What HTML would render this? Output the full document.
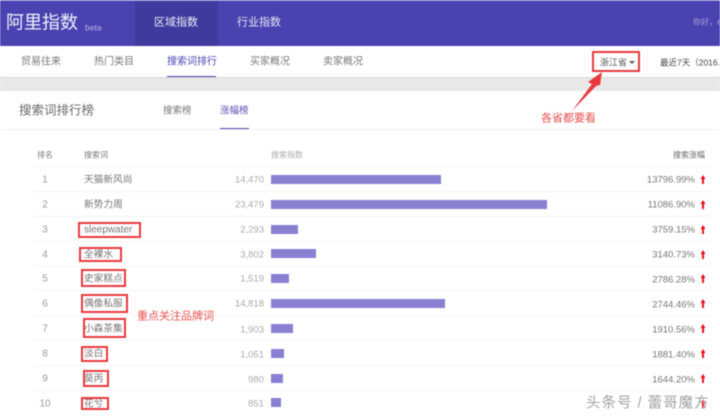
<!DOCTYPE html>
<html><head><meta charset="utf-8">
<style>
html,body{margin:0;padding:0;background:#fff}
#p{position:relative;width:720px;height:416px;overflow:hidden;background:#fff;font-family:"Liberation Sans","Noto Sans CJK SC",sans-serif;color:#666;filter:blur(.4px)}
#p div{position:absolute;white-space:nowrap}
.t{transform:translateY(calc(-50% + 1.5px));line-height:16px}
.sep{left:33px;width:677px;height:1px;background:#f4f4f4}
.bar{left:271px;height:9px;background:#8a80d2}
.r{font-size:10px;color:#999;width:20px;text-align:center;left:35px}
.k{font-size:9.7px;color:#777;left:84px}
.v{font-size:9.5px;color:#aaa;left:220px;width:44px;text-align:right}
.g{font-size:9.5px;color:#777;left:620px;width:75px;text-align:right}
.box{border:2px solid #e8383d;box-sizing:border-box}
.n{font-size:10px;color:#777}
.red{color:#e8504f;font-size:11px}
</style></head><body>
<div id="p">
<div style="left:0;top:0;width:720px;height:1px;background:#8f8ad0"></div>
<div style="left:0;top:1px;width:720px;height:45px;background:#4a42b0"></div>
<div style="left:135px;top:1px;width:83px;height:45px;background:#3f3a9e"></div>
<div class="t" style="left:6px;top:21px;font-size:18px;color:#f2f1fa">阿里指数</div>
<div class="t" style="left:85px;top:26px;font-size:8.5px;color:#b9b6e4">beta</div>
<div class="t" style="left:154px;top:21px;font-size:11px;color:#eeedf8">区域指数</div>
<div class="t" style="left:237px;top:21px;font-size:11px;color:#e6e5f5">行业指数</div>
<div class="t" style="left:693px;top:21px;font-size:8px;color:#a9a5dc">你好，a</div>

<div class="t n" style="left:21px;top:61px">贸易往来</div>
<div class="t n" style="left:94px;top:61px">热门类目</div>
<div class="t" style="left:167px;top:61px;font-size:10px;color:#4f47b4">搜索词排行</div>
<div style="left:167px;top:76px;width:49px;height:1px;background:#4a42b0"></div>
<div class="t n" style="left:250px;top:61px">买家概况</div>
<div class="t n" style="left:323px;top:61px">卖家概况</div>
<div class="t" style="left:600px;top:61px;font-size:9px;color:#555">浙江省</div>
<div style="left:629px;top:61px;width:0;height:0;border-left:3px solid transparent;border-right:3px solid transparent;border-top:3px solid #555"></div>
<div class="t" style="left:660px;top:61px;font-size:8.5px;color:#444">最近7天（2016.</div>
<div style="left:0;top:77px;width:720px;height:14px;background:#e8e8e8;border-top:1px solid #d8d8d8;box-sizing:border-box"></div>

<div class="t" style="left:19px;top:108.5px;font-size:12.5px;color:#666">搜索词排行榜</div>
<div class="t" style="left:163px;top:110px;font-size:9.5px;color:#777">搜索榜</div>
<div class="t" style="left:220px;top:110px;font-size:9.5px;color:#5a52b8">涨幅榜</div>
<div style="left:0;top:129px;width:720px;height:1px;background:#eee"></div>
<div style="left:220px;top:128px;width:29px;height:1px;background:#4a42b0"></div>

<div class="t" style="left:37px;top:154px;font-size:8px;color:#777">排名</div>
<div class="t" style="left:84px;top:154px;font-size:8px;color:#777">搜索词</div>
<div class="t" style="left:271px;top:154px;font-size:8px;color:#aaa">搜索指数</div>
<div class="t" style="left:673px;top:154px;font-size:8px;color:#666">搜索涨幅</div>

<div class="sep" style="top:166px"></div><div class="sep" style="top:191px"></div><div class="sep" style="top:216px"></div><div class="sep" style="top:241px"></div><div class="sep" style="top:266px"></div><div class="sep" style="top:290px"></div><div class="sep" style="top:315px"></div><div class="sep" style="top:340px"></div><div class="sep" style="top:365px"></div><div class="sep" style="top:390px"></div>

<div class="t r" style="top:179px">1</div><div class="t k" style="top:179px">天猫新风尚</div><div class="t v" style="top:179px">14,470</div><div class="bar" style="top:175px;width:170px"></div><div class="t g" style="top:179px">13796.99%</div>
<div class="t r" style="top:204px">2</div><div class="t k" style="top:204px">新势力周</div><div class="t v" style="top:204px">23,479</div><div class="bar" style="top:200px;width:276px"></div><div class="t g" style="top:204px">11086.90%</div>
<div class="t r" style="top:229px">3</div><div class="t k" style="top:229px;font-size:10px">sleepwater</div><div class="t v" style="top:229px">2,293</div><div class="bar" style="top:225px;width:27px"></div><div class="t g" style="top:229px">3759.15%</div>
<div class="t r" style="top:254px">4</div><div class="t k" style="top:254px">全裸水</div><div class="t v" style="top:254px">3,802</div><div class="bar" style="top:249px;width:45px"></div><div class="t g" style="top:254px">3140.73%</div>
<div class="t r" style="top:278px">5</div><div class="t k" style="top:278px">史家糕点</div><div class="t v" style="top:278px">1,519</div><div class="bar" style="top:274px;width:18px"></div><div class="t g" style="top:279px">2786.28%</div>
<div class="t r" style="top:303px">6</div><div class="t k" style="top:303px">偶像私服</div><div class="t v" style="top:303px">14,818</div><div class="bar" style="top:299px;width:174px"></div><div class="t g" style="top:304px">2744.46%</div>
<div class="t r" style="top:328px">7</div><div class="t k" style="top:328px">小森茶集</div><div class="t v" style="top:329px">1,903</div><div class="bar" style="top:324px;width:22px"></div><div class="t g" style="top:329px">1910.56%</div>
<div class="t r" style="top:353px">8</div><div class="t k" style="top:353px">淡白</div><div class="t v" style="top:354px">1,051</div><div class="bar" style="top:349px;width:13px"></div><div class="t g" style="top:354px">1881.40%</div>
<div class="t r" style="top:378px">9</div><div class="t k" style="top:378px">莫丙</div><div class="t v" style="top:379px">980</div><div class="bar" style="top:374px;width:12px"></div><div class="t g" style="top:379px">1644.20%</div>
<div class="t r" style="top:403px">10</div><div class="t k" style="top:403px">花兮</div><div class="t v" style="top:403px">851</div><div class="bar" style="top:398px;width:10px"></div>

<svg style="position:absolute;left:698px;top:170px" width="10" height="240" viewBox="0 0 10 240">
<g fill="#e8101a" transform="translate(.5,0)">
<path id="a" d="M4.5 5L7 9H5.5V14H3.5V9H2Z"/>
<use href="#a" y="25"/><use href="#a" y="50"/><use href="#a" y="75"/><use href="#a" y="99"/><use href="#a" y="124"/><use href="#a" y="149"/><use href="#a" y="174"/><use href="#a" y="199"/><use href="#a" y="224"/>
</g></svg>

<div class="box" style="left:592px;top:51px;width:48px;height:21px"></div>
<div class="box" style="left:78px;top:222px;width:63px;height:16px"></div>
<div class="box" style="left:79px;top:247px;width:43px;height:15px"></div>
<div class="box" style="left:81px;top:269px;width:45px;height:18px"></div>
<div class="box" style="left:81px;top:294px;width:47px;height:19px"></div>
<div class="box" style="left:83px;top:318px;width:43px;height:20px"></div>
<div class="box" style="left:81px;top:346px;width:27px;height:16px"></div>
<div class="box" style="left:83px;top:370px;width:26px;height:17px"></div>
<div class="box" style="left:81px;top:397px;width:28px;height:13px"></div>

<svg style="position:absolute;left:565px;top:68px" width="45" height="48" viewBox="0 0 45 48">
<path d="M37 4L23 14L27 16L7 43L31 18L35 17Z" fill="#e8383d"/>
</svg>
<div class="t red" style="left:541px;top:117px">各省都要看</div>
<div class="t red" style="left:137px;top:315px">重点关注品牌词</div>

<div class="t" style="left:586px;top:401.5px;font-size:14.5px;letter-spacing:1px;color:#a0a0a0;text-shadow:0 0 2px #fff">头条号 / 蕾哥魔方</div>
</div>
</body></html>
